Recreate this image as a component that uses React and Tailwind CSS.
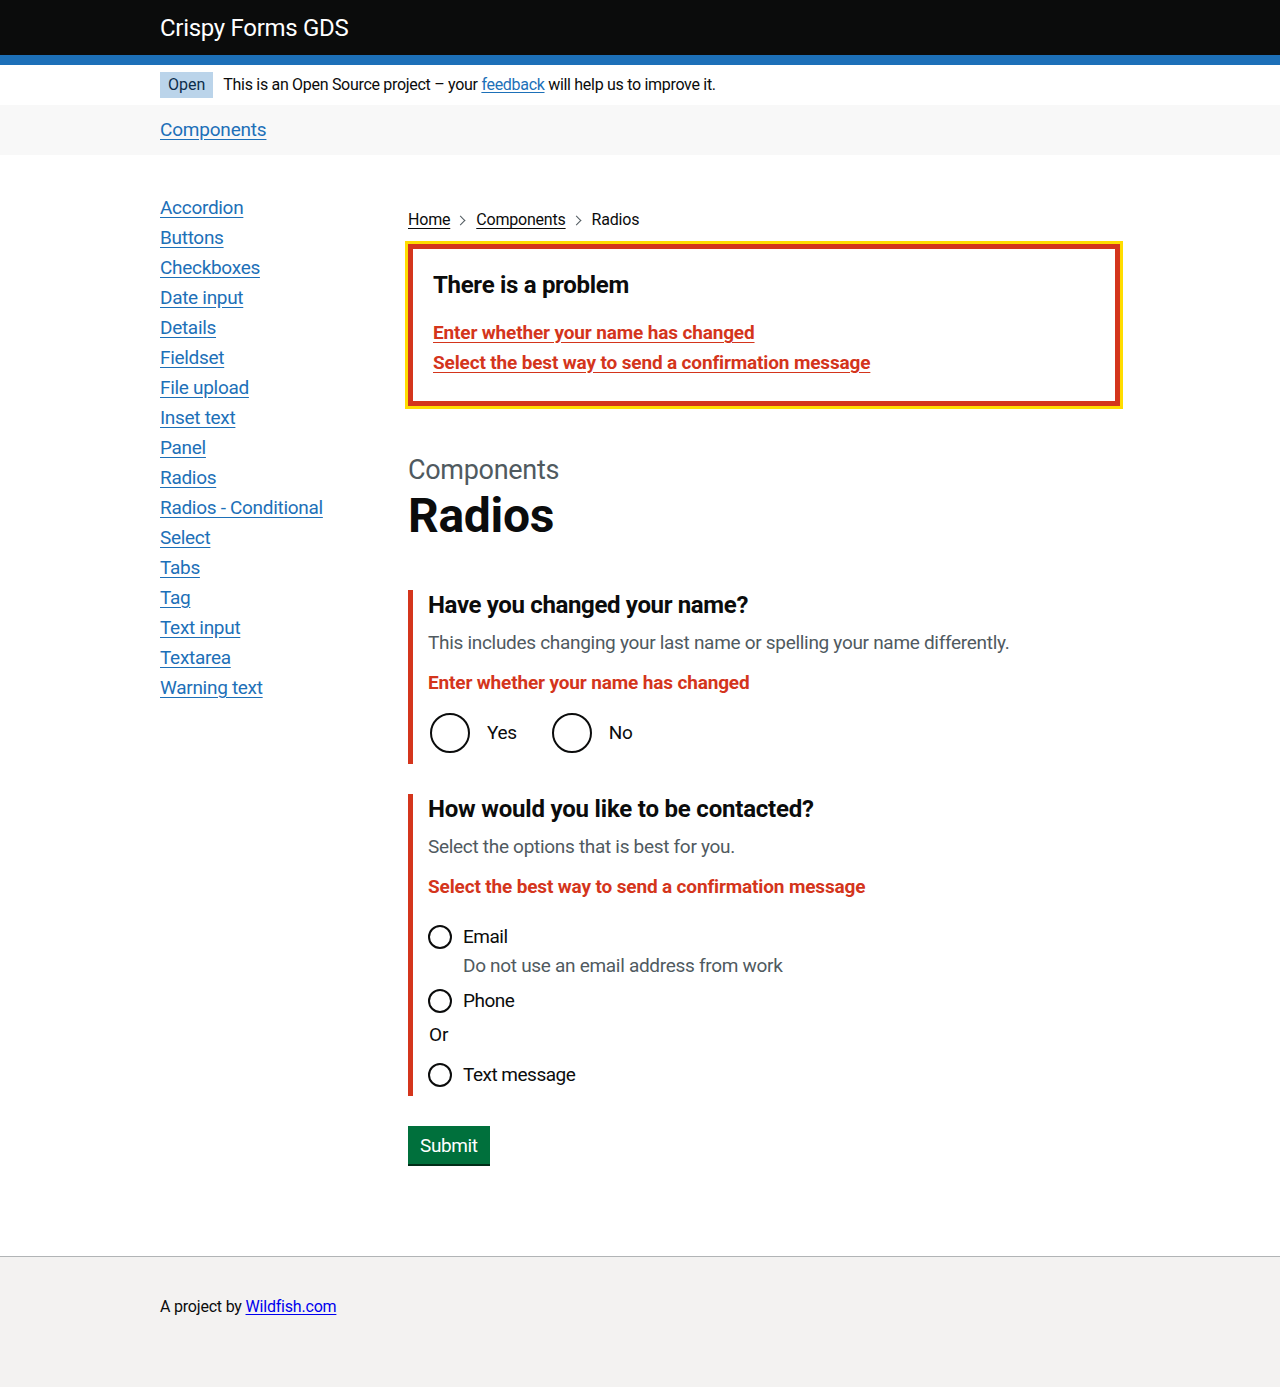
import React from 'react'

const font = { fontFamily: 'Roboto, "Liberation Sans", Arial, sans-serif' }

const sideLinks = [
  'Accordion', 'Buttons', 'Checkboxes', 'Date input', 'Details', 'Fieldset', 'File upload',
  'Inset text', 'Panel', 'Radios', 'Radios - Conditional', 'Select', 'Tabs', 'Tag',
  'Text input', 'Textarea', 'Warning text',
]

const Chevron = () => (
  <span className="inline-block w-[7px] h-[7px] border-t border-r border-[#505a5f] rotate-45 ml-[7px] mr-[12px]" />
)

const BigRadio = ({ label }) => (
  <div className="flex items-center h-[40px] mr-[18px]">
    <span className="ml-[2px] w-[40px] h-[40px] rounded-full border-2 border-[#0b0c0c] shrink-0" />
    <span className="pl-[17px] pr-[15px] text-[19px] tracking-[-0.3px]">{label}</span>
  </div>
)

const SmallRadio = ({ label }) => (
  <div className="flex items-center h-[40px]">
    <span className="w-[24px] h-[24px] rounded-full border-2 border-[#0b0c0c] shrink-0" />
    <span className="pl-[11px] text-[19px] tracking-[-0.5px]">{label}</span>
  </div>
)

export default function App() {
  return (
    <div style={font} className="text-[#0b0c0c] bg-white">
      <header className="bg-[#0b0c0c] h-[55px]">
        <div className="w-[960px] mx-auto h-full flex items-center">
          <span className="text-white text-[24px] tracking-[-0.3px]">Crispy Forms GDS</span>
        </div>
      </header>
      <div className="h-[10px] bg-[#1d70b8]" />

      <div className="w-[960px] mx-auto h-[40px] flex items-center">
        <span className="bg-[#bbd4ea] text-[#0c2d4a] text-[16px] h-[26px] px-[8px] flex items-center">Open</span>
        <span className="ml-[10px] text-[16px] tracking-[-0.3px]">
          This is an Open Source project – your{' '}
          <a href="#" className="text-[#1d70b8] underline underline-offset-2">feedback</a>{' '}
          will help us to improve it.
        </span>
      </div>

      <nav className="bg-[#f8f8f8] h-[50px]">
        <div className="w-[960px] mx-auto h-full flex items-center">
          <a href="#" className="text-[19px] text-[#1d70b8] underline underline-offset-[3px] tracking-[-0.2px]">Components</a>
        </div>
      </nav>

      <main className="w-[960px] mx-auto flex">
        <aside className="w-[248px] shrink-0 pt-[40px]">
          <ul>
            {sideLinks.map((l) => (
              <li key={l} className="text-[19px] leading-[25px] h-[25px] mb-[5px]">
                <a href="#" className="text-[#1d70b8] underline underline-offset-[3px] tracking-[-0.3px]">{l}</a>
              </li>
            ))}
          </ul>
        </aside>

        <div className="flex-1 pt-[54px] pb-[92px]">
          <div className="text-[16px] leading-[20px] h-[20px] flex items-center tracking-[-0.2px] mt-[1px]">
            <a href="#" className="underline underline-offset-[3px]">Home</a>
            <Chevron />
            <a href="#" className="underline underline-offset-[3px]">Components</a>
            <Chevron />
            <span>Radios</span>
          </div>

          <div className="mt-[14px] border-[5px] border-[#d4351c] outline-[3px] outline-solid outline-[#ffdd00] px-[20px] pt-[21px] pb-[26px]">
            <h2 className="text-[24px] font-bold leading-[30px] tracking-[-0.3px] mb-[20px]">There is a problem</h2>
            <ul>
              <li className="text-[19px] leading-[25px] h-[25px] mb-[5px]">
                <a href="#" className="font-bold text-[#d4351c] underline underline-offset-[3px] tracking-[-0.15px]">Enter whether your name has changed</a>
              </li>
              <li className="text-[19px] leading-[25px] h-[25px]">
                <a href="#" className="font-bold text-[#d4351c] underline underline-offset-[3px] tracking-[-0.15px]">Select the best way to send a confirmation message</a>
              </li>
            </ul>
          </div>

          <div className="mt-[49px]">
            <span className="block text-[27px] leading-[30px] text-[#505a5f] mb-[6px] tracking-[-0.3px]">Components</span>
            <h1 className="text-[48px] leading-[50px] font-bold tracking-[-0.3px]">Radios</h1>
          </div>

          <fieldset className="mt-[49px] border-l-[5px] border-[#d4351c] pl-[15px] pb-[11px]">
            <span className="block text-[24px] leading-[30px] font-bold tracking-[-0.35px]">Have you changed your name?</span>
            <p className="mt-[10px] text-[19px] leading-[25px] text-[#505a5f] tracking-[-0.3px]">This includes changing your last name or spelling your name differently.</p>
            <p className="mt-[15px] text-[19px] leading-[25px] font-bold text-[#d4351c] tracking-[-0.15px]">Enter whether your name has changed</p>
            <div className="mt-[18px] flex">
              <BigRadio label="Yes" />
              <BigRadio label="No" />
            </div>
          </fieldset>

          <fieldset className="mt-[30px] border-l-[5px] border-[#d4351c] pl-[15px] pb-[1px]">
            <span className="block text-[24px] leading-[30px] font-bold tracking-[-0.2px]">How would you like to be contacted?</span>
            <p className="mt-[10px] text-[19px] leading-[25px] text-[#505a5f] tracking-[-0.3px]">Select the options that is best for you.</p>
            <p className="mt-[15px] text-[19px] leading-[25px] font-bold text-[#d4351c] tracking-[-0.15px]">Select the best way to send a confirmation message</p>
            <div className="mt-[18px]">
              <SmallRadio label="Email" />
              <p className="-mt-[4px] pl-[35px] text-[19px] leading-[25px] text-[#505a5f] tracking-[-0.3px]">Do not use an email address from work</p>
              <div className="mt-[3px]"><SmallRadio label="Phone" /></div>
              <p className="mt-[1px] pl-[1px] text-[19px] leading-[25px]">Or</p>
              <div className="mt-[8px]"><SmallRadio label="Text message" /></div>
            </div>
          </fieldset>

          <button className="mt-[30px] bg-[#00703c] text-white text-[19px] leading-[25px] px-[12px] pt-[7px] pb-[6px] tracking-[-0.4px] shadow-[0_2px_0_#002d18]">Submit</button>
        </div>
      </main>

      <footer className="bg-[#f3f2f1] border-t border-[#b1b4b6] h-[131px]">
        <div className="w-[960px] mx-auto pt-[40px] text-[16px] leading-[20px] tracking-[-0.2px]">
          A project by <a href="#" className="text-[#0000ee] underline underline-offset-2">Wildfish.com</a>
        </div>
      </footer>
    </div>
  )
}
